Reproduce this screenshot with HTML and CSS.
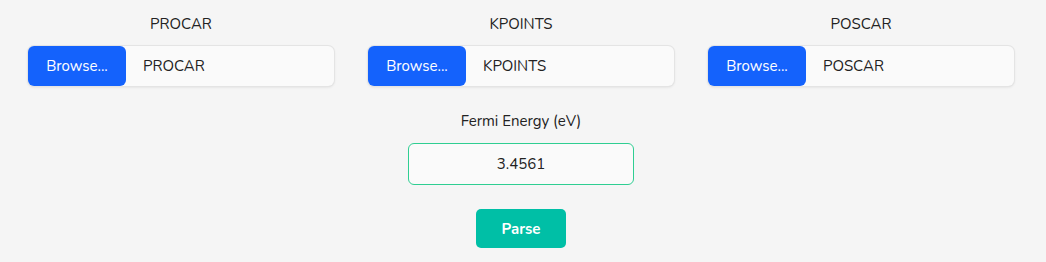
FILE: index.html
```html
<!DOCTYPE html>
<html lang="en">
<head>
    <meta charset="UTF-8">
    <meta name="viewport" content="width=device-width, initial-scale=1.0">
    <title>Parse VASP files</title>
    <link rel="stylesheet" href="styles.css">
</head>
<body>
    <div class="form">
        <div class="files">
            <div class="field">
                <label class="field__label">PROCAR</label>
                <div class="file">
                    <span class="file__button">Browse...</span>
                    <span class="file__name">PROCAR</span>
                </div>
            </div>
            <div class="field">
                <label class="field__label">KPOINTS</label>
                <div class="file">
                    <span class="file__button">Browse...</span>
                    <span class="file__name">KPOINTS</span>
                </div>
            </div>
            <div class="field">
                <label class="field__label">POSCAR</label>
                <div class="file">
                    <span class="file__button">Browse...</span>
                    <span class="file__name">POSCAR</span>
                </div>
            </div>
        </div>

        <div class="fermi">
            <label class="field__label">Fermi Energy (eV)</label>
            <input class="fermi__input" type="text" value="3.4561">
        </div>

        <button class="parse">Parse</button>
    </div>
</body>
</html>
```

FILE: styles.css
```css
* {
    margin: 0;
    padding: 0;
    box-sizing: border-box;
}

body {
    background-color: #f5f5f5;
    font-family: "Nunito", "Lato", "Noto Sans", sans-serif;
    color: #222;
    font-size: 15px;
}

.form {
    width: 986px;
    margin-left: 28px;
    padding-top: 14px;
    display: flex;
    flex-direction: column;
    align-items: center;
}

.files {
    width: 100%;
    display: flex;
    gap: 34px;
}

.field {
    width: 306px;
    display: flex;
    flex-direction: column;
    align-items: center;
}

.field__label {
    font-size: 15px;
    line-height: 20px;
    margin-bottom: 12px;
}

.file {
    width: 100%;
    height: 40px;
    display: flex;
    align-items: center;
    background-color: #fafafa;
    border-radius: 6px;
    box-shadow: 0 0 0 1px #e4e4e4, 0 1px 3px rgba(0,0,0,0.12);
}

.file__button {
    width: 98px;
    height: 100%;
    display: flex;
    align-items: center;
    justify-content: center;
    background-color: #1462fc;
    color: #fff;
    border-radius: 6px;
    font-size: 15px;
}

.file__name {
    padding-left: 17px;
    font-size: 15px;
}

.fermi {
    margin-top: 25px;
    display: flex;
    flex-direction: column;
    align-items: center;
}

.fermi .field__label {
    margin-bottom: 12px;
}

.fermi__input {
    width: 226px;
    height: 42px;
    border: 1px solid #2fce92;
    border-radius: 6px;
    background-color: #fafafa;
    text-align: center;
    font-family: inherit;
    font-size: 15px;
    color: #222;
    outline: none;
}

.parse {
    margin-top: 24px;
    width: 90px;
    height: 39px;
    border: none;
    border-radius: 5px;
    background-color: #00bfa6;
    color: #fff;
    font-family: inherit;
    font-weight: bold;
    font-size: 15px;
    cursor: pointer;
}
```
